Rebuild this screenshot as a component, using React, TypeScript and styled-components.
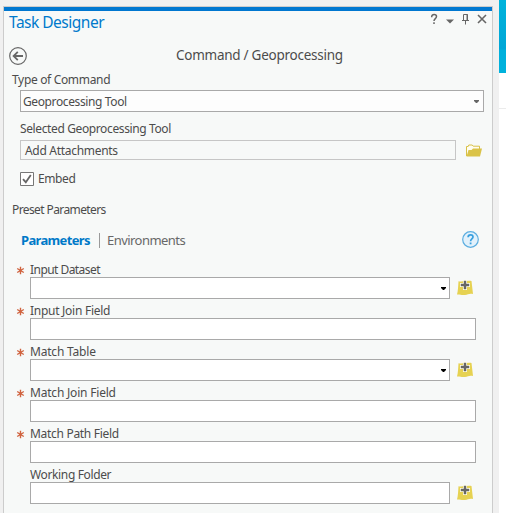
import React from 'react';
import styled, { createGlobalStyle } from 'styled-components';

const GlobalStyle = createGlobalStyle`
  * { box-sizing: border-box; }
  body {
    margin: 0;
    overflow: hidden;
    background: #f0f0f0;
    color: #4c4c4c;
    font: 12px/16px "Noto Sans", "Open Sans", sans-serif;
  }
  svg { display: block; flex: none; }
`;

const Desktop = styled.div`
  display: flex;
  width: 506px;
  height: 513px;
  overflow: hidden;
  background: #f0f0f0;
`;

const Panel = styled.section`
  width: 490px;
  margin: 6px 6px 0 3px;
  border: 1px solid #cccccc;
  border-bottom: 0;
  background: #f7f9f8;
  flex: none;
`;

const AccentBar = styled.div`
  height: 4px;
  background: #0077d0;
`;

const Backdrop = styled.aside`
  flex: 1;
  display: flex;
  flex-direction: column;
  background: #fff;
`;

const Banner = styled.div`
  height: 73px;
  background: linear-gradient(#00b3dc 0, #00a6d6 49px, #00b0dc 50px, #00b2dc 100%);
`;

const BackdropHeader = styled.div`
  height: 36px;
  border-bottom: 1px solid #ebebeb;
`;

const TitleBar = styled.header`
  display: flex;
  justify-content: space-between;
  height: 33px;
  padding: 0 4px 0 5px;
`;

const Title = styled.h1<{ $track: number }>`
  margin: 0;
  font-size: 15.5px;
  line-height: 22px;
  font-weight: 400;
  letter-spacing: ${p => p.$track}px;
  color: #0079cc;
`;

const Heading = styled.header`
  display: flex;
  align-items: flex-start;
  height: 28px;
  padding: 3px 0 0 5px;
`;

const HeadingText = styled.h2<{ $track: number }>`
  margin: -1px 0 0 149px;
  font-size: 13.5px;
  line-height: 18px;
  font-weight: 400;
  letter-spacing: ${p => p.$track}px;
  white-space: nowrap;
`;

const Label = styled.div<{ $indent?: number; $track?: number }>`
  height: 16px;
  padding-left: ${p => p.$indent ?? 0}px;
  letter-spacing: ${p => p.$track ?? 0}px;
  white-space: nowrap;
`;

const Select = styled.div`
  display: flex;
  align-items: center;
  justify-content: space-between;
  width: 464px;
  height: 22px;
  margin: 2px 0 9px 16px;
  padding: 1px 4px 0 2px;
  border: 1px solid #a9a9a9;
  background: #fdfdfd;
`;

const ToolRow = styled.div`
  display: flex;
  align-items: center;
  gap: 10px;
  height: 20px;
  margin: 3px 0 11px 16px;
`;

const ReadOnly = styled.div`
  width: 436px;
  height: 20px;
  padding: 2px 4px 0;
  border: 1px solid #c6c6c6;
`;

const CheckRow = styled.label`
  display: flex;
  align-items: center;
  gap: 4px;
  height: 16px;
  margin: 0 0 15px 16px;
`;

const Tabs = styled.nav`
  display: flex;
  align-items: center;
  height: 20px;
  margin: 12px 13px 12px 17px;
`;

const Tab = styled.span<{ $active?: boolean; $width: number; $track: number }>`
  width: ${p => p.$width}px;
  font-size: 13px;
  line-height: 18px;
  font-weight: ${p => (p.$active ? 700 : 400)};
  letter-spacing: ${p => p.$track}px;
  color: ${p => (p.$active ? '#0079c8' : '#686868')};
  white-space: nowrap;
`;

const TabDivider = styled.span`
  width: 1px;
  height: 15px;
  margin: 0 7px 0 8px;
  background: #9a9a9a;
`;

const HelpSlot = styled.span`
  margin: -1px 0 0 auto;
`;

const Field = styled.div`
  height: 41px;
  padding-left: 12px;
`;

const FieldLabel = styled.div<{ $track: number }>`
  display: flex;
  align-items: center;
  height: 15px;
  letter-spacing: ${p => p.$track}px;
  white-space: nowrap;
`;

const Marker = styled.span`
  width: 14px;
  padding-top: 2px;
`;

const InputRow = styled.div`
  display: flex;
  align-items: center;
  gap: 7px;
  padding-left: 14px;
`;

const Input = styled.div<{ $wide?: boolean }>`
  display: flex;
  align-items: center;
  justify-content: flex-end;
  width: ${p => (p.$wide ? 446 : 420)}px;
  height: 22px;
  padding: 1px 3px 0 0;
  border: 1px solid #a9a9a9;
  background: #fff;
`;

const Caret = ({ color = '#000' }: { color?: string }) => (
  <svg width="5" height="3" viewBox="0 0 5 3"><path d="M0 0h5v1L3 3H2L0 1z" fill={color} /></svg>
);

const WindowControls = () => (
  <svg width="68" height="24" viewBox="0 0 68 24" fill="none" stroke="#666">
    <path d="M11.7 6.2V5.7c0-1.4 1-2.2 2.4-2.2s2.4.8 2.4 2.1c0 2.2-2.5 2-2.5 4.5M14 11.3v1.7" strokeWidth="1.5" />
    <path d="M26 8.5h8l-4 4z" fill="#666" stroke="none" />
    <path d="M43.5 9V3.5h4V9M42 9.5h7M45.5 10v3.5" />
    <path d="M47 3v6" />
    <path d="M58 4l8 8m0-8l-8 8" strokeWidth="1.6" />
  </svg>
);

const BackIcon = () => (
  <svg width="18" height="18" viewBox="0 0 18 18" fill="none" stroke="#666">
    <circle cx="9" cy="9" r="8.3" strokeWidth="1.2" />
    <path d="M14 9H5" strokeWidth="2" />
    <path d="M8.8 4.8L4.6 9l4.2 4.2" strokeWidth="1.8" />
  </svg>
);

const FolderIcon = () => (
  <svg width="16" height="13" viewBox="0 0 16 13">
    <path d="M.5 12V2.5h1.7l.6-1.5h3.4l1 1.2h6.3V5" fill="#fffdf0" stroke="#d8c046" />
    <path d="M.5 12.5L2.5 6h3L7 4.5h9L14 12.5z" fill="#dac348" />
  </svg>
);

const HelpIcon = () => (
  <svg width="17" height="17" viewBox="0 0 17 17">
    <circle cx="8.5" cy="8.5" r="7.8" fill="#e2f1fb" stroke="#5caee0" strokeWidth="1.2" />
    <path d="M6.1 6.2c0-1.5 1-2.4 2.5-2.4s2.4.9 2.4 2.2c0 1.9-2.4 2.1-2.4 4.2" fill="none" stroke="#38a0df" strokeWidth="1.7" />
    <path d="M7.7 11.5h1.8v1.8H7.7z" fill="#38a0df" />
  </svg>
);

const MapAddIcon = () => (
  <svg width="16" height="16" viewBox="0 0 16 16">
    <path d="M1.5 1.2c4 .7 9-.8 13-.2L16 14c-3-1-5 .3-8 .9-3 .5-5-.6-8-.4C1 11 1.2 6 1.5 1.2z" fill="#e6d252" />
    <path d="M6 0h4v3h3v4h-3v3H6V7H3V3h3z" fill="#fbf8df" />
    <path d="M7 1h2v3h3v2H9v3H7V6H4V4h3z" fill="#666" stroke="#666" strokeWidth=".4" />
  </svg>
);

const RequiredMark = () => (
  <svg width="9" height="9" viewBox="0 0 9 9">
    <path d="M4.5.8v7.4M1.2 2.5l6.6 4M7.8 2.5l-6.6 4" stroke="#d0633f" strokeWidth="1.4" />
  </svg>
);

const Checkbox = () => (
  <svg width="14" height="14" viewBox="0 0 14 14" fill="none">
    <path d="M.5.5h13v13H.5z" fill="#fff" stroke="#777" />
    <path d="M3 7.2l2.8 3L10.8 3" stroke="#666" strokeWidth="1.8" />
  </svg>
);

type FieldSpec = { name: string; required?: boolean; menu?: boolean; browse?: boolean; track: number };

const fields: FieldSpec[] = [
  { name: 'Input Dataset', required: true, menu: true, browse: true, track: -0.55 },
  { name: 'Input Join Field', required: true, track: -0.27 },
  { name: 'Match Table', required: true, menu: true, browse: true, track: -0.2 },
  { name: 'Match Join Field', required: true, track: -0.2 },
  { name: 'Match Path Field', required: true, track: -0.3 },
  { name: 'Working Folder', browse: true, track: -0.36 },
];

export default function App() {
  return (
    <Desktop>
      <GlobalStyle />
      <Panel>
        <AccentBar />
        <TitleBar>
          <Title $track={-0.5}>Task Designer</Title>
          <WindowControls />
        </TitleBar>
        <Heading>
          <BackIcon />
          <HeadingText $track={-0.26}>Command / Geoprocessing</HeadingText>
        </Heading>
        <Label $indent={8} $track={-0.33}>Type of Command</Label>
        <Select><Label $track={-0.38}>Geoprocessing Tool</Label><Caret color="#666" /></Select>
        <Label $indent={16} $track={-0.38}>Selected Geoprocessing Tool</Label>
        <ToolRow>
          <ReadOnly><Label $track={-0.3}>Add Attachments</Label></ReadOnly>
          <FolderIcon />
        </ToolRow>
        <CheckRow><Checkbox /><Label $track={-0.4}>Embed</Label></CheckRow>
        <Label $indent={8} $track={-0.6}>Preset Parameters</Label>
        <Tabs>
          <Tab $active $width={70} $track={-0.65}>Parameters</Tab>
          <TabDivider />
          <Tab $width={80} $track={-0.55}>Environments</Tab>
          <HelpSlot><HelpIcon /></HelpSlot>
        </Tabs>
        {fields.map(f => (
          <Field key={f.name}>
            <FieldLabel $track={f.track}>
              <Marker>{f.required && <RequiredMark />}</Marker>
              {f.name}
            </FieldLabel>
            <InputRow>
              <Input $wide={!f.browse}>{f.menu && <Caret />}</Input>
              {f.browse && <MapAddIcon />}
            </InputRow>
          </Field>
        ))}
      </Panel>
      <Backdrop>
        <Banner />
        <BackdropHeader />
      </Backdrop>
    </Desktop>
  );
}
